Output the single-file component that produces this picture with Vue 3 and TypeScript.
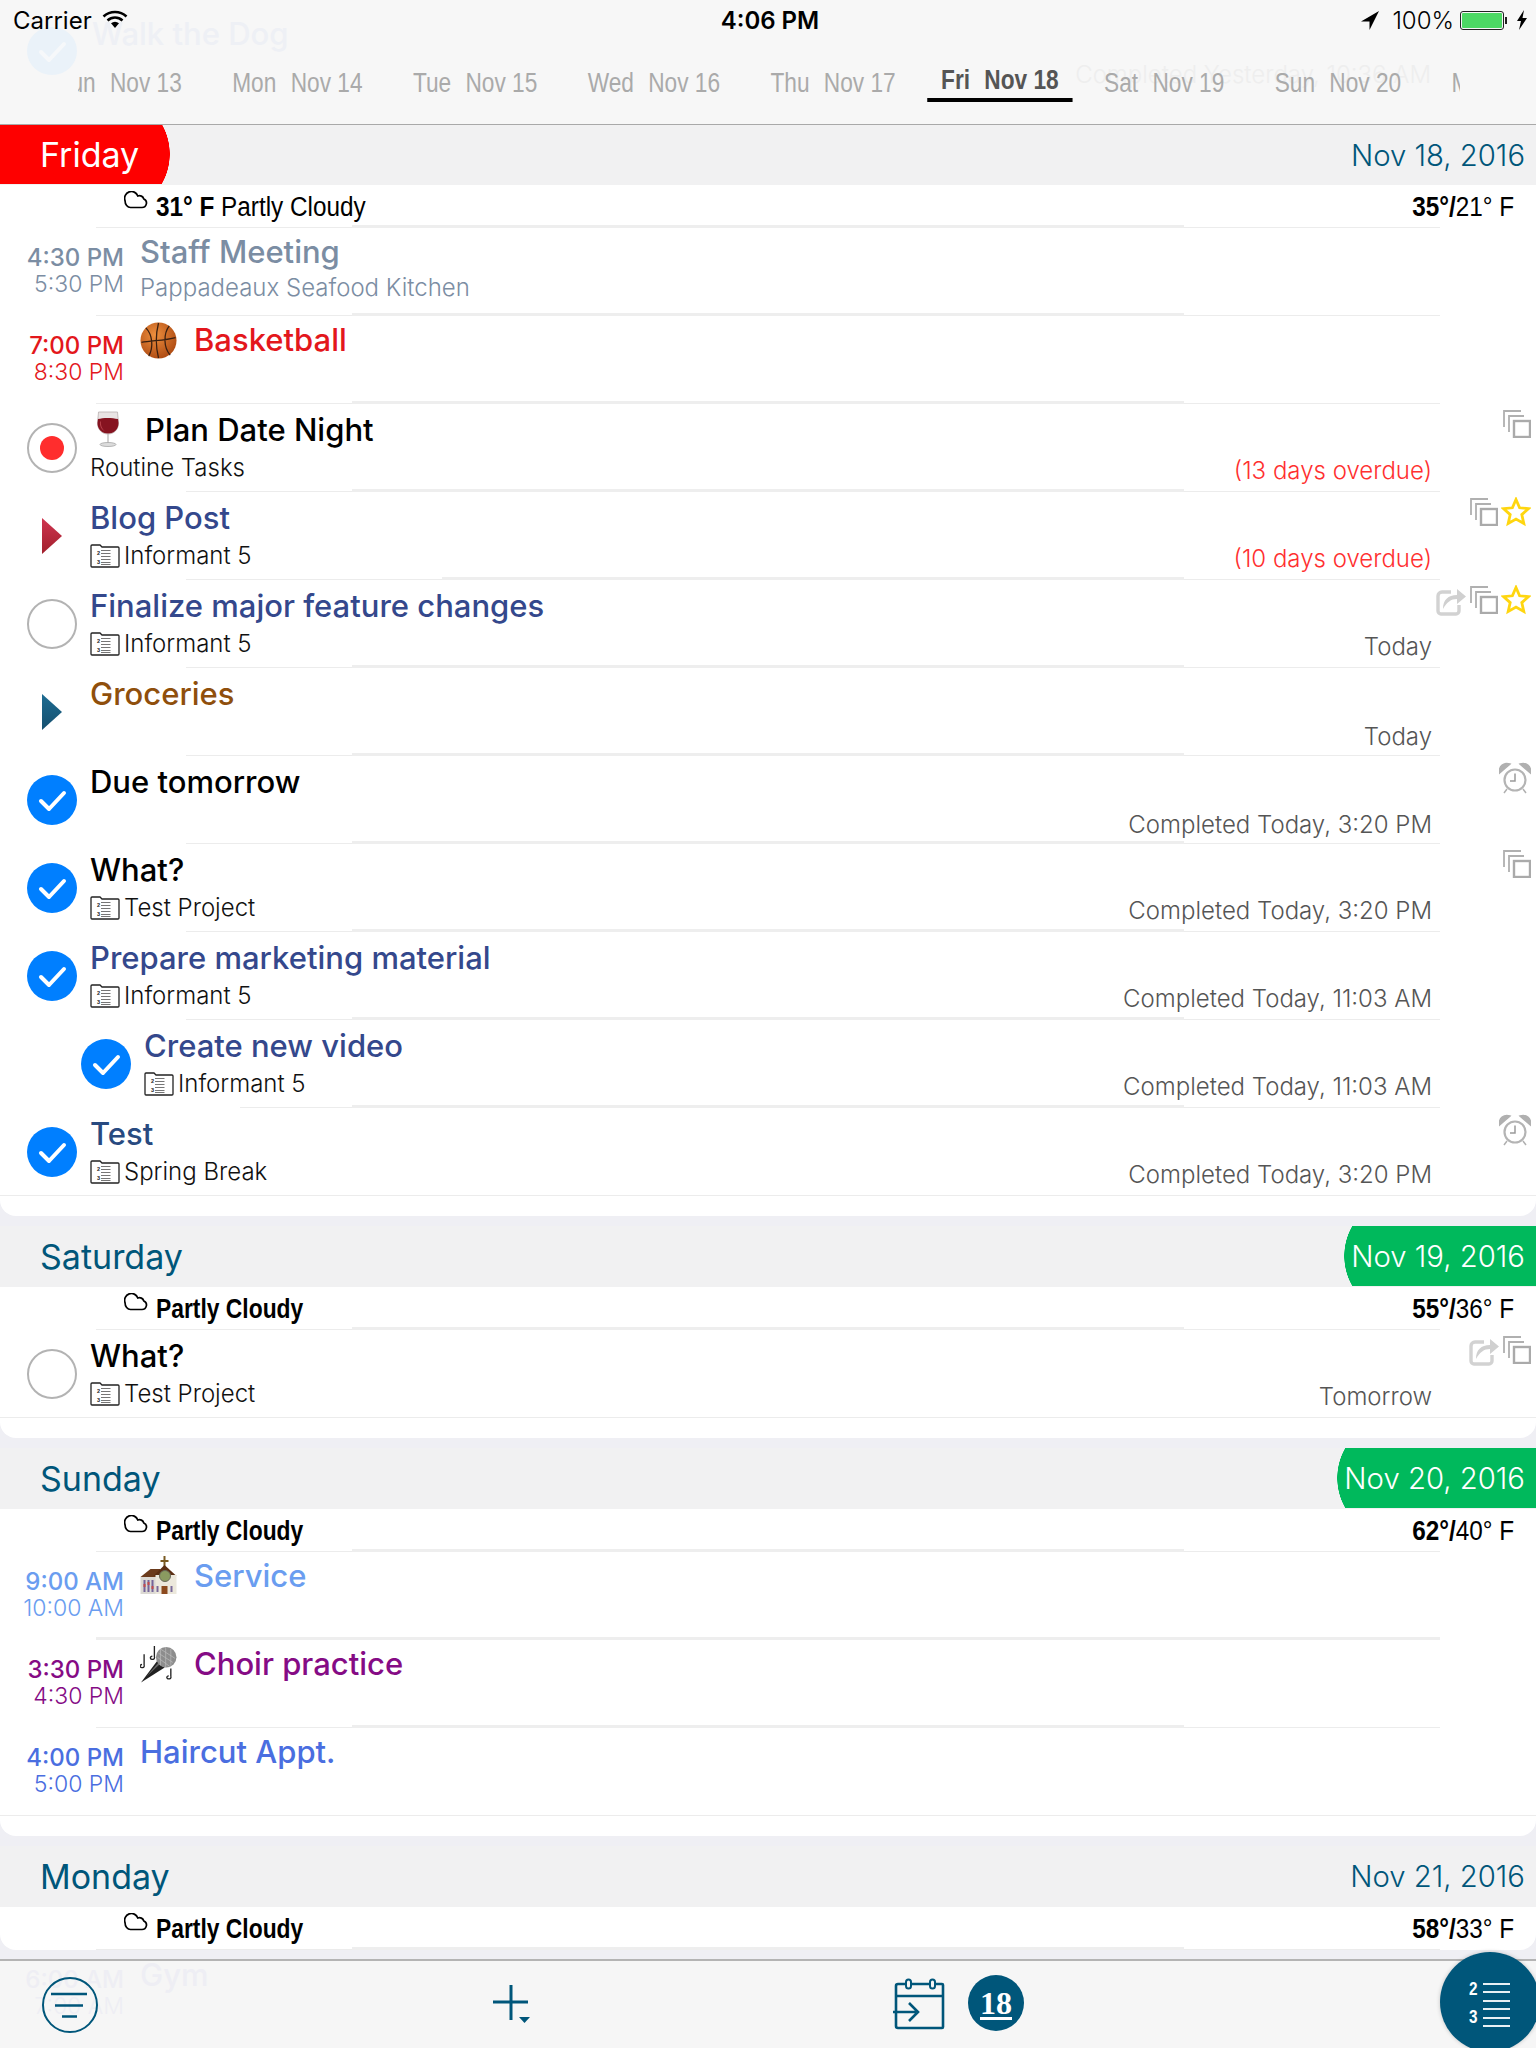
<script setup lang="ts">
type Item = {
  kind: 'event' | 'task'
  title: string
  color: string
  start?: string
  end?: string
  sub?: string
  emoji?: string
  status?: 'done' | 'open' | 'dot' | 'red' | 'blue'
  project?: string
  note?: string
  noteRed?: boolean
  indent?: boolean
  icons?: string[]
  sep?: number[]
}
type Section = {
  day: string
  date: string
  pill?: 'day' | 'date'
  cond?: string
  now?: string
  hi: string
  lo: string
  items: Item[]
}

const base = [96, 352, 1184, 1440]
const mid = [186, 352, 1184, 1440]

const strip = [
  ['Sun', 'Nov 13'], ['Mon', 'Nov 14'], ['Tue', 'Nov 15'], ['Wed', 'Nov 16'], ['Thu', 'Nov 17'],
  ['Fri', 'Nov 18'], ['Sat', 'Nov 19'], ['Sun', 'Nov 20'], ['Mon', 'Nov 21'],
]

const sections: Section[] = [
  {
    day: 'Friday', date: 'Nov 18, 2016', pill: 'day', now: '31° F', cond: 'Partly Cloudy', hi: '35°/', lo: '21° F',
    items: [
      { kind: 'event', start: '4:30 PM', end: '5:30 PM', title: 'Staff Meeting', sub: 'Pappadeaux Seafood Kitchen', color: '#7b8da3', sep: base },
      { kind: 'event', start: '7:00 PM', end: '8:30 PM', title: 'Basketball', emoji: 'ball', color: '#e3171c', sep: base },
      { kind: 'task', status: 'dot', emoji: 'wine', title: 'Plan Date Night', sub: 'Routine Tasks', color: '#000', note: '(13 days overdue)', noteRed: true, icons: ['copy'], sep: mid },
      { kind: 'task', status: 'red', title: 'Blog Post', project: 'Informant 5', color: '#34488c', note: '(10 days overdue)', noteRed: true, icons: ['copy', 'star'], sep: [186, 442, 1184, 1440] },
      { kind: 'task', status: 'open', title: 'Finalize major feature changes', project: 'Informant 5', color: '#34488c', note: 'Today', icons: ['share', 'copy', 'star'], sep: mid },
      { kind: 'task', status: 'blue', title: 'Groceries', color: '#8f4f0c', note: 'Today', sep: mid },
      { kind: 'task', status: 'done', title: 'Due tomorrow', color: '#000', note: 'Completed Today, 3:20 PM', icons: ['alarm'], sep: mid },
      { kind: 'task', status: 'done', title: 'What?', project: 'Test Project', color: '#000', note: 'Completed Today, 3:20 PM', icons: ['copy'], sep: mid },
      { kind: 'task', status: 'done', title: 'Prepare marketing material', project: 'Informant 5', color: '#34488c', note: 'Completed Today, 11:03 AM', sep: [186, 352, 1184, 1440] },
      { kind: 'task', status: 'done', indent: true, title: 'Create new video', project: 'Informant 5', color: '#34488c', note: 'Completed Today, 11:03 AM', sep: [240, 352, 1184, 1440] },
      { kind: 'task', status: 'done', title: 'Test', project: 'Spring Break', color: '#284a80', note: 'Completed Today, 3:20 PM', icons: ['alarm'] },
    ],
  },
  {
    day: 'Saturday', date: 'Nov 19, 2016', pill: 'date', cond: 'Partly Cloudy', hi: '55°/', lo: '36° F',
    items: [
      { kind: 'task', status: 'open', title: 'What?', project: 'Test Project', color: '#000', note: 'Tomorrow', icons: ['share', 'copy'] },
    ],
  },
  {
    day: 'Sunday', date: 'Nov 20, 2016', pill: 'date', cond: 'Partly Cloudy', hi: '62°/', lo: '40° F',
    items: [
      { kind: 'event', start: '9:00 AM', end: '10:00 AM', title: 'Service', emoji: 'church', color: '#6a9df0', sep: [96, 96, 1440, 1440] },
      { kind: 'event', start: '3:30 PM', end: '4:30 PM', title: 'Choir practice', emoji: 'mic', color: '#850b85', sep: base },
      { kind: 'event', start: '4:00 PM', end: '5:00 PM', title: 'Haircut Appt.', color: '#4a6ee0' },
    ],
  },
  {
    day: 'Monday', date: 'Nov 21, 2016', cond: 'Partly Cloudy', hi: '58°/', lo: '33° F',
    items: [],
  },
]

function segs(s: number[]) {
  return {
    margin: s[0] + 'px',
    a: s[1] - s[0] + 'px',
    b: s[2] - s[1] + 'px',
    c: s[3] - s[2] + 'px',
  }
}
</script>

<template>
  <div class="page">
    <svg class="defs" width="0" height="0" aria-hidden="true">
      <defs>
        <linearGradient id="gred" x1="0" y1="0" x2="0" y2="1"><stop offset="0" stop-color="#cf3550" /><stop offset="1" stop-color="#a11f2c" /></linearGradient>
        <linearGradient id="gblue" x1="0" y1="0" x2="0" y2="1"><stop offset="0" stop-color="#1d6c92" /><stop offset="1" stop-color="#154f6e" /></linearGradient>
        <radialGradient id="gball" cx=".4" cy=".35" r=".75"><stop offset="0" stop-color="#ee8f3e" /><stop offset="1" stop-color="#a8440e" /></radialGradient>
        <symbol id="copy" viewBox="0 0 28 28">
          <path d="M1 17V1H18M6 22V6H21" fill="none" stroke="#b0b0b0" stroke-width="1.800" />
          <rect x="11" y="11" width="16" height="16" fill="none" stroke="#aaaaaa" stroke-width="2.400" />
        </symbol>
        <symbol id="star" viewBox="0 0 30 30">
          <path d="M15 2.500l3.600 8.300 9 .8-6.800 6 2 8.800L15 22l-7.800 4.400 2-8.800-6.800-6 9-.8z" fill="none" stroke="#ffd60f" stroke-width="2.800" stroke-linejoin="miter" />
        </symbol>
        <symbol id="share" viewBox="0 0 30 32">
          <path d="M15 8H6a4 4 0 0 0-4 4v15a3 3 0 0 0 3 3h15a3 3 0 0 0 3-3v-6" fill="none" stroke="#d2d2d2" stroke-width="3.400" />
          <path d="M7 25c0-9 5-14 14-14V5l9 7.500-9 7.500v-5c-6 0-10 3-14 10z" fill="#d0d0d0" />
        </symbol>
        <symbol id="alarm" viewBox="0 0 32 32">
          <circle cx="16" cy="18" r="10.500" fill="none" stroke="#b4b4b4" stroke-width="2.200" />
          <path d="M16 11.500V19h-5" fill="none" stroke="#9a9a9a" stroke-width="1.500" />
          <path d="M.5 11C-.5 4 5 0 11 2zM31.500 11C32.500 4 27 0 21 2zM8 27l-3 4M24 27l3 4" fill="#b0b0b0" stroke="#b0b0b0" stroke-width="1.500" />
        </symbol>
        <symbol id="project" viewBox="0 0 30 24">
          <path d="M1 22V2a1 1 0 0 1 1-1h8l2 2h16a1 1 0 0 1 1 1v18a1 1 0 0 1-1 1H2a1 1 0 0 1-1-1z" fill="#fff" stroke="#222" stroke-width="1.300" />
          <path d="M11 6.500h9.500M11 9.500h9.500M11 12.500h9.500M11 15.500h9.500M11 18.500h9.500M11 20.500h9.500" stroke="#666" stroke-width=".9" />
          <text x="7" y="11" font-size="5.500" font-weight="700" font-family="Liberation Sans, sans-serif" fill="#222">2</text>
          <text x="7" y="20" font-size="5.500" font-weight="700" font-family="Liberation Sans, sans-serif" fill="#222">3</text>
        </symbol>
        <symbol id="cloud" viewBox="0 0 24 18">
          <path d="M6.500 16.500H18a4.500 4.500 0 0 0 1.800-8.600 4.500 4.500 0 0 0-6-2.900A6.500 6.500 0 0 0 1 9.500c0 4 2.500 7 5.500 7z" fill="none" stroke="#000" stroke-width="1.700" />
        </symbol>
        <symbol id="ball" viewBox="0 0 38 38">
          <circle cx="19" cy="19" r="18.500" fill="url(#gball)" />
          <path d="M1.500 21C12 19 26 19 36.500 16M19 1c-3 12-3 24 0 36M6 6c7 7 8 20 3 29M30 4c-6 8-6 22 1 30" fill="none" stroke="#3a1f10" stroke-width="1.300" />
        </symbol>
        <symbol id="wine" viewBox="0 0 26 36">
          <path d="M3.500 1h19l1 11c0 6-4 11-10.500 11S2.500 18 2.500 12z" fill="#e9e4e4" stroke="#b9b0b0" stroke-width=".8" />
          <path d="M3 8c5-1.500 14-1.500 20 0l.5 4c0 6-4 10.500-10.500 10.500S2.500 18 2.500 12z" fill="#861320" />
          <path d="M6 10c-.5 4 1 8 4 10-3.500-1-5.500-5-5-9z" fill="#b6404a" />
          <path d="M12.300 23h1.400v9h-1.400z" fill="#bfbcbc" />
          <ellipse cx="13" cy="33.500" rx="8" ry="2" fill="#dcdcdc" stroke="#a7a7a7" stroke-width=".8" />
        </symbol>
        <symbol id="church" viewBox="0 0 36 38">
          <path d="M23 0h2v4h3v2h-3v5h-2V6h-3V4h3z" fill="#7a5a22" />
          <path d="M0 21 10 13h10l-2 8z" fill="#6b3b1c" />
          <path d="M13 20 24 9l12 11z" fill="#5b2f14" />
          <rect x="0" y="21" width="18" height="17" fill="#dcd9d3" />
          <rect x="15" y="19" width="21" height="19" fill="#ece8dc" />
          <path d="M3 24h2v12H3zM7 24h2v12H7zM11 24h2v12h-2z" fill="#75659a" />
          <path d="M3 28h2v3H3zM7 26h2v3H7zM11 30h2v3h-2z" fill="#c24a4a" />
          <circle cx="24.500" cy="20" r="5.500" fill="#8a9a60" stroke="#6a6a5a" />
          <rect x="21" y="30" width="6" height="8" fill="#8c4a1e" />
          <path d="M30 30h2v6h-2zM16 30h2v6h-2z" fill="#7a6a9a" />
        </symbol>
        <symbol id="mic" viewBox="0 0 36 36">
          <path d="M1 35.500 17 14l7 7z" fill="#202020" />
          <path d="M6 30 18 16l1.500 1.500z" fill="#666" />
          <circle cx="25.500" cy="11" r="10" fill="#8d8d8d" />
          <path d="M18 7l14 9M20 3l14 9M17 11l12 9M25 1v20M30 3v16M20 3v16" stroke="#bcbcbc" stroke-width=".7" />
          <path d="M4 8v11M4 19a2 1.500 0 1 1-2-1M14 0v11M14 11a2 1.500 0 1 1-2-1M30 22v8M30 30a2 1.500 0 1 1-2-1" fill="none" stroke="#222" stroke-width="1.300" />
        </symbol>
      </defs>
    </svg>

    <header class="top">
      <div class="ghost-top">
        <span class="ghost-circle">
          <svg viewBox="0 0 50 48" width="50" height="48"><path d="M14 25l8 8 15-16" fill="none" stroke="#f6f8fa" stroke-width="4" stroke-linecap="round" stroke-linejoin="round" /></svg>
        </span>
        <span class="ghost-title">Walk the Dog</span>
        <span class="ghost-note">Completed Yesterday, 10:36 AM</span>
      </div>
      <div class="status">
        <div class="st-left">
          <span>Carrier</span>
          <svg class="wifi" viewBox="0 0 26 20" width="26" height="20">
            <path d="M1.500 7.500C8 1.500 18 1.500 24.500 7.500M5.500 11.500c4.500-4 10.500-4 15 0" fill="none" stroke="#000" stroke-width="2.600" />
            <path d="M9 14.300c2.500-2 5.500-2 8 0L13 19z" fill="#000" />
          </svg>
        </div>
        <div class="st-time">4:06 PM</div>
        <div class="st-right">
          <svg viewBox="0 0 18 20" width="18" height="20"><path d="M18 1 0 11.500h8.500V20z" fill="#000" /></svg>
          <span class="pct">100%</span>
          <span class="batt"><span class="fill"></span></span>
          <span class="nub"></span>
          <svg class="bolt" viewBox="0 0 10 20" width="10" height="20"><path d="M7 0 0 11h4l-2 9 8-12H5.500z" fill="#000" /></svg>
        </div>
      </div>
      <div class="strip">
        <div class="strip-in">
          <div v-for="(d, i) in strip" :key="i" class="chip" :class="{ on: d[1] === 'Nov 18' }">
            <span class="chip-d">{{ d[0] }}</span><span>{{ d[1] }}</span>
          </div>
        </div>
      </div>
    </header>

    <main class="list">
      <section v-for="(s, si) in sections" :key="s.day" class="sec" :class="{ first: si === 0 }">
        <div class="head">
          <span class="day" :class="{ redpill: s.pill === 'day' }">{{ s.day }}</span>
          <span class="date" :class="{ greenpill: s.pill === 'date' }">{{ s.date }}</span>
        </div>
        <div class="card" :class="{ last: si === 3 }">
          <div class="weather">
            <svg class="cloud"><use href="#cloud" /></svg>
            <span v-if="s.now" class="wtext"><b>{{ s.now }}</b>&nbsp;{{ s.cond }}</span>
            <b v-else class="wtext wbold">{{ s.cond }}</b>
            <span class="wtemp"><b>{{ s.hi }}</b>{{ s.lo }}</span>
          </div>
          <div class="sep" :style="{ marginLeft: '96px' }">
            <i class="thin" style="width:256px"></i><i class="thick" style="width:832px"></i><i class="thin" style="width:256px"></i>
          </div>

          <template v-for="it in s.items" :key="it.title">
            <div class="row" :class="{ indent: it.indent }">
              <div v-if="it.kind === 'event'" class="times" :style="{ color: it.color }">
                <div class="t1">{{ it.start }}</div>
                <div class="t2">{{ it.end }}</div>
              </div>
              <div v-else class="lead">
                <span v-if="it.status === 'open' || it.status === 'dot'" class="ring"><span v-if="it.status === 'dot'" class="dot"></span></span>
                <span v-else-if="it.status === 'done'" class="check">
                  <svg viewBox="0 0 50 50" width="50" height="50"><path d="M14 26l8 8 15-16" fill="none" stroke="#fff" stroke-width="4" stroke-linecap="round" stroke-linejoin="round" /></svg>
                </span>
                <svg v-else class="tri" viewBox="0 0 20 36" width="20" height="36"><path d="M0 0 20 18 0 36z" :fill="it.status === 'red' ? 'url(#gred)' : 'url(#gblue)'" /></svg>
              </div>
              <div class="main" :class="{ ev: it.kind === 'event' }">
                <div class="title" :style="{ color: it.color }">
                  <svg v-if="it.emoji" class="emoji" :class="it.emoji"><use :href="'#' + it.emoji" /></svg>
                  <span>{{ it.title }}</span>
                </div>
                <div v-if="it.sub" class="sub" :class="{ evsub: it.kind === 'event' }">{{ it.sub }}</div>
                <div v-else-if="it.project" class="sub proj">
                  <svg class="pic"><use href="#project" /></svg>
                  <span>{{ it.project }}</span>
                </div>
              </div>
              <div v-if="it.note" class="note" :class="{ red: it.noteRed, low: !it.project && !it.sub }">{{ it.note }}</div>
              <div class="side">
                <svg v-for="ic in it.icons || []" :key="ic" class="ic" :class="ic"><use :href="'#' + ic" /></svg>
              </div>
            </div>
            <div v-if="it.sep" class="sep" :style="{ marginLeft: segs(it.sep).margin }">
              <i class="thin" :style="{ width: segs(it.sep).a }"></i><i class="thick" :style="{ width: segs(it.sep).b }"></i><i class="thin" :style="{ width: segs(it.sep).c }"></i>
            </div>
            <div v-else class="sep"><i class="thin full"></i></div>
          </template>
        </div>
      </section>
    </main>

    <footer class="bar">
      <div class="ghost-foot">
        <div class="gf-times"><div class="t1">6:00 AM</div><div class="t2">7:00 AM</div></div>
        <div class="gf-title">Gym</div>
      </div>
      <svg class="b-filter" viewBox="0 0 56 56" width="56" height="56">
        <circle cx="28" cy="28" r="27" fill="none" stroke="#00567a" stroke-width="2" />
        <path d="M9 17h36M13 28.500h28M20 39.500h15" stroke="#00567a" stroke-width="2.400" />
      </svg>
      <svg class="b-plus" viewBox="0 0 38 38" width="38" height="38">
        <path d="M18 0v35M0 17h35" stroke="#00567a" stroke-width="3" />
        <path d="M26 32h11l-5.500 6z" fill="#00567a" />
      </svg>
      <svg class="b-cal" viewBox="0 0 52 52" width="52" height="52">
        <path d="M3 44V8a2 2 0 0 1 2-2h44a1 1 0 0 1 1 1v42a1 1 0 0 1-1 1H5a2 2 0 0 1-2-2v-8M3 30V22M3 18h47" fill="none" stroke="#00567a" stroke-width="2.600" />
        <rect x="13" y="1.500" width="5" height="9" rx="2.500" fill="#f6f6f6" stroke="#00567a" stroke-width="2" />
        <rect x="37" y="1.500" width="5" height="9" rx="2.500" fill="#f6f6f6" stroke="#00567a" stroke-width="2" />
        <path d="M0 34h23M16 25l9 9-9 9" fill="none" stroke="#00567a" stroke-width="2.600" />
      </svg>
      <div class="b-badge"><span>18</span></div>
      <div class="b-list">
        <div class="nums"><span>2</span><span>3</span></div>
        <div class="lines"><i></i><i></i><i></i><i></i><i></i><i></i></div>
      </div>
    </footer>
  </div>
</template>

<style scoped>
.page {
  position: relative;
  width: 1536px;
  height: 2048px;
  overflow: hidden;
  display: flex;
  flex-direction: column;
  background: #efeff4;
  font-family: Inter, "Liberation Sans", sans-serif;
}
.defs { position: absolute; }

.top {
  position: relative;
  flex: none;
  height: 124px;
  border-bottom: 1px solid #a9a9a9;
  background: #f7f7f7;
}
.ghost-top { position: absolute; inset: 0; }
.ghost-circle { position: absolute; left: 27px; top: 27px; width: 50px; height: 48px; border-radius: 50%; background: #eaf2f9; }
.ghost-circle svg { display: block; }
.ghost-title { position: absolute; left: 92px; top: 15px; font-size: 31px; line-height: 38px; font-weight: 500; color: #eef0f5; }
.ghost-note { position: absolute; right: 105px; top: 60px; font-size: 24px; line-height: 30px; font-weight: 300; color: #eeeeee; }

.status {
  position: relative;
  height: 40px;
  display: grid;
  grid-template-columns: 1fr auto 1fr;
  align-items: center;
  padding: 0 9px 0 13px;
  font-size: 24px;
  color: #000;
}
.st-left { display: flex; align-items: center; gap: 10px; }
.wifi { margin-top: -3px; }
.st-time { font-weight: 600; }
.st-right { display: flex; align-items: center; justify-content: flex-end; }
.pct { margin: 0 6px 0 13px; font-weight: 300; }
.batt { width: 44px; height: 19px; border: 1px solid #222; border-radius: 3px; padding: 1px; box-sizing: border-box; display: block; }
.fill { display: block; height: 100%; background: #4cd964; border-radius: 1px; }
.nub { width: 2px; height: 7px; background: #222; margin: 0 10px 0 1px; }

.strip {
  position: relative;
  margin: 22px 0 0 78px;
  width: 1382px;
  height: 62px;
  overflow: hidden;
  font-family: "Liberation Sans", sans-serif;
  font-size: 27px;
  line-height: 36px;
  color: #aaaaaa;
  white-space: nowrap;
}
.strip-in {
  display: flex;
  gap: 60px;
  width: max-content;
  transform: scaleX(.84);
  transform-origin: 0 0;
}
.chip { flex: none; height: 40px; padding-top: 3px; box-sizing: border-box; }
.chip:first-child { margin-left: -27px; }
.chip-d { margin-right: 17px; }
.chip.on {
  color: #555;
  font-weight: 700;
  padding: 0 16px;
  margin: 0 -22px;
  border-bottom: 4px solid #000;
}

.list { flex: 1; min-height: 0; overflow: hidden; }
.sec { padding-bottom: 10px; }
.head {
  height: 61px;
  display: flex;
  justify-content: space-between;
  background: #f1f1f2;
  font-size: 34px;
  color: #00567a;
}
.first .head { height: 60px; }
.first .redpill { margin-top: -1px; }
.day, .date {
  height: 60px;
  display: flex;
  align-items: center;
  box-sizing: border-box;
}
.day { padding-left: 40px; padding-right: 31px; }
.date { padding-left: 7px; padding-right: 11px; font-size: 29.300px; font-weight: 300; }
.redpill {
  color: #fff;
  background:
    radial-gradient(circle at calc(100% - 60px) 50%, #fe0000 59.500px, transparent 60px),
    linear-gradient(to right, #fe0000 calc(100% - 60px), transparent calc(100% - 60px));
}
.greenpill {
  color: #fff;
  font-weight: 300;
  background:
    radial-gradient(circle at 60px 50%, #00b95c 59.500px, transparent 60px),
    linear-gradient(to left, #00b95c calc(100% - 60px), transparent calc(100% - 60px));
}

.card { background: #fff; padding-bottom: 20px; border-radius: 0 0 16px 16px; }
.card.last { padding-bottom: 0; }

.weather {
  position: relative;
  height: 40px;
  box-sizing: border-box;
  padding: 5px 22px 0 124px;
  display: flex;
  align-items: center;
  font-family: "Liberation Sans", sans-serif;
  font-size: 27px;
  color: #000;
}
.cloud { flex: none; width: 24px; height: 18px; margin: -16px 8px 0 0; }
.wtext { flex: 1; white-space: nowrap; transform: scaleX(.90); transform-origin: 0 50%; }
.wbold { font-weight: 700; transform: scaleX(.846); }
.wtext b, .wtemp b { font-weight: 700; }
.wtemp { white-space: nowrap; transform: scaleX(.9); transform-origin: 100% 50%; }

.sep { display: flex; align-items: flex-end; height: 3px; }
.sep i { display: block; flex: none; }
.thin { height: 1px; background: #ececec; }
.thick { height: 3px; background: #eeeeee; }
.full { width: 100%; }

.row { height: 85px; display: flex; color: #000; }
.lead { flex: none; width: 90px; display: flex; align-items: center; padding: 3px 0 0 27px; box-sizing: border-box; }
.indent .lead { width: 144px; padding-left: 81px; }
.ring { width: 50px; height: 50px; box-sizing: border-box; border: 2px solid #b3b3b3; border-radius: 50%; display: flex; align-items: center; justify-content: center; }
.dot { width: 24px; height: 24px; border-radius: 50%; background: #ff2d2d; }
.check { width: 50px; height: 50px; border-radius: 50%; background: #007fff; display: block; }
.check svg { display: block; }
.tri { margin-left: 15px; }

.times { flex: none; width: 124px; margin-right: 16px; text-align: right; padding-top: 15px; white-space: nowrap; }
.t1 { font-size: 24px; line-height: 29px; font-weight: 500; }
.t2 { font-size: 23px; line-height: 25px; font-weight: 300; }

.main { flex: 1; min-width: 0; padding-top: 7px; }
.main.ev { padding-top: 5px; }
.title { display: flex; align-items: flex-start; font-size: 31px; line-height: 38px; font-weight: 500; white-space: nowrap; }
.emoji { flex: none; width: 37px; height: 37px; margin-right: 17px; margin-top: 1px; }
.emoji.church { margin-top: -1px; height: 38px; }
.emoji.wine { width: 26px; height: 36px; margin: 0 24px 0 5px; }
.sub { margin-top: 4px; font-size: 24px; line-height: 30px; font-weight: 300; color: #111; white-space: nowrap; }
.evsub { color: #7b8da3; margin-top: 2px; }
.proj { display: flex; align-items: center; gap: 4px; font-weight: 300; }
.pic { width: 30px; height: 24px; flex: none; }

.note {
  flex: none;
  align-self: flex-end;
  padding-bottom: 4px;
  font-size: 24px;
  line-height: 28px;
  font-weight: 300;
  color: #555;
  white-space: nowrap;
}
.note.low { padding-bottom: 2px; }
.note.red { color: #ff3030; }
.side {
  flex: none;
  width: 104px;
  margin-left: 0;
  box-sizing: border-box;
  display: flex;
  justify-content: flex-end;
  gap: 3px;
  padding: 6px 5px 0 0;
}
.ic.copy { width: 28px; height: 28px; }
.ic.star { width: 30px; height: 30px; margin-top: -1px; }
.ic.share { width: 30px; height: 32px; margin-top: -2px; margin-right: 1px; }
.ic.alarm { width: 32px; height: 32px; }

.bar {
  position: relative;
  flex: none;
  height: 89px;
  box-sizing: border-box;
  border-top: 2px solid #b4b4b4;
  background: #f6f6f6;
}
.ghost-foot { position: absolute; left: 0; top: -5px; display: flex; color: #eeeef4; }
.gf-times { width: 124px; margin-right: 16px; text-align: right; padding-top: 9px; }
.gf-title { font-size: 31px; line-height: 38px; font-weight: 500; }
.b-filter { position: absolute; left: 42px; top: 16px; }
.b-plus { position: absolute; left: 493px; top: 24px; }
.b-cal { position: absolute; left: 893px; top: 17px; }
.b-badge {
  position: absolute;
  left: 968px;
  top: 14px;
  width: 56px;
  height: 56px;
  border-radius: 50%;
  background: #00567a;
  color: #fff;
  display: flex;
  align-items: center;
  justify-content: center;
  font-family: "Liberation Serif", serif;
  font-weight: 700;
  font-size: 32px;
  text-decoration: underline;
  text-decoration-thickness: 2.500px;
  text-underline-offset: 3px;
}
.b-list {
  position: absolute;
  left: 1440px;
  top: -9px;
  width: 100px;
  height: 100px;
  border-radius: 50%;
  background: #00567a;
  box-shadow: 0 0 4px rgba(0, 0, 0, .2);
  color: #fff;
}
.nums {
  position: absolute;
  left: 29px;
  top: 28px;
  display: flex;
  flex-direction: column;
  gap: 10px;
  font-family: "Liberation Sans", sans-serif;
  font-size: 18px;
  line-height: 18px;
  font-weight: 700;
  transform: scaleX(.85);
  transform-origin: 0 0;
}
.lines { position: absolute; left: 43px; top: 31px; width: 27px; display: flex; flex-direction: column; gap: 6.400px; }
.lines i { display: block; height: 2px; background: #e8f0f4; }
</style>
